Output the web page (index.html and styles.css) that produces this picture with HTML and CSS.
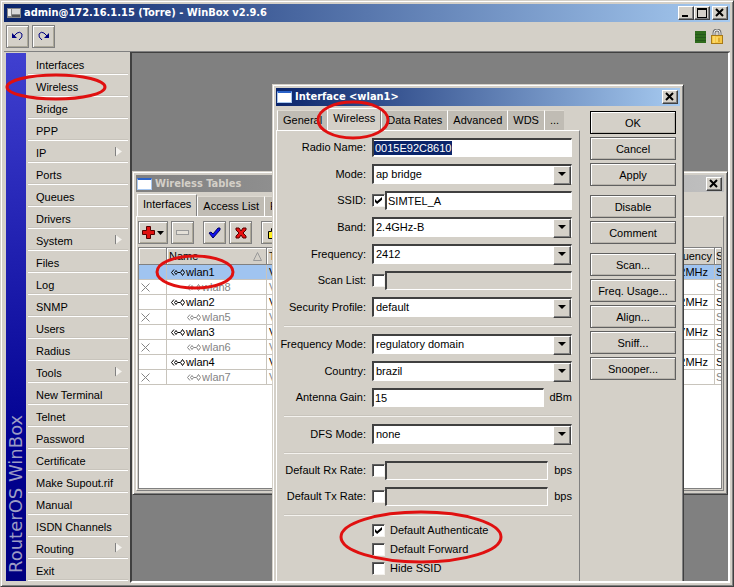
FILE: index.html
```html
<!doctype html>
<html lang="en">
<head>
	<title>admin@172.16.1.15 (Torre) - WinBox v2.9.6</title>
	<meta charset="utf-8" />
	<link rel="stylesheet" href="styles.css">
</head>
<body>
	<div class="app frame">
		<header class="titlebar">
			<svg class="app-icon" width="14" height="10" viewBox="0 0 14 10">
				<rect width="14" height="10" fill="#888"/>
				<rect x="1" y="1" width="3" height="7" fill="#eee"/>
				<rect x="5" y="1" width="8" height="5" fill="#d8d8d8"/>
				<rect x="5" y="7" width="8" height="2" fill="#555"/>
			</svg>
			<h1>admin@172.16.1.15 (Torre) - WinBox v2.9.6</h1>
			<button class="win-btn" aria-label="Minimize"><svg width="12" height="10"><path d="M2 7h6v2H2z"/></svg></button>
			<button class="win-btn" aria-label="Maximize"><svg width="12" height="10"><path d="M1 0h10v10H1zM2 2v7h8V2z" fill-rule="evenodd"/></svg></button>
			<button class="win-btn close" aria-label="Close"><svg width="12" height="10"><path d="M2 1l7 7M9 1L2 8" stroke="#000" stroke-width="2"/></svg></button>
		</header>

		<div class="toolbar">
			<button class="tool" aria-label="Undo">
				<svg width="13" height="11" viewBox="0 0 13 11"><path d="M1 2v5h5z" fill="#000080"/><path d="M3 5L6 2Q9 0 11 3Q12 6 8 9" fill="none" stroke="#000080"/></svg>
			</button>
			<button class="tool" aria-label="Redo">
				<svg width="13" height="11" viewBox="0 0 13 11"><path d="M12 2v5H7z" fill="#000080"/><path d="M10 5L7 2Q4 0 2 3Q1 6 5 9" fill="none" stroke="#000080"/></svg>
			</button>
			<svg class="load" width="11" height="12"><rect width="11" height="12" fill="#2f6b1c"/><path d="M0 3.500h11M0 6.500h11M0 9.500h11" stroke="#24581a"/></svg>
			<svg class="lock" width="12" height="15" viewBox="0 0 12 15">
				<path d="M3 7V4q0-3 3-3t3 3v3" fill="none" stroke="#777" stroke-width="3"/>
				<path d="M3 7V4q0-3 3-3t3 3v3" fill="none" stroke="#eee"/>
				<rect x=".5" y="6.500" width="11" height="8" fill="#f6c744" stroke="#a87a18"/>
				<path d="M3 7v7M6 8v5" stroke="#ffe88a"/><path d="M8 9v4" stroke="#c78f1c"/>
			</svg>
		</div>

		<div class="main">
			<nav class="sidebar">
				<div class="brand"><span>RouterOS WinBox</span></div>
				<ul class="menu">
					<li><a href="#">Interfaces</a></li>
					<li><a href="#">Wireless</a></li>
					<li><a href="#">Bridge</a></li>
					<li><a href="#">PPP</a></li>
					<li><a class="more" href="#">IP</a></li>
					<li><a href="#">Ports</a></li>
					<li><a href="#">Queues</a></li>
					<li><a href="#">Drivers</a></li>
					<li><a class="more" href="#">System</a></li>
					<li><a href="#">Files</a></li>
					<li><a href="#">Log</a></li>
					<li><a href="#">SNMP</a></li>
					<li><a href="#">Users</a></li>
					<li><a href="#">Radius</a></li>
					<li><a class="more" href="#">Tools</a></li>
					<li><a href="#">New Terminal</a></li>
					<li><a href="#">Telnet</a></li>
					<li><a href="#">Password</a></li>
					<li><a href="#">Certificate</a></li>
					<li><a href="#">Make Supout.rif</a></li>
					<li><a href="#">Manual</a></li>
					<li><a href="#">ISDN Channels</a></li>
					<li><a class="more" href="#">Routing</a></li>
					<li><a href="#">Exit</a></li>
				</ul>
			</nav>

			<main class="desktop">
				<section class="window frame tables">
					<header class="titlebar inactive">
						<span class="doc-icon"></span>
						<h2>Wireless Tables</h2>
						<button class="win-btn close" aria-label="Close"><svg width="12" height="10"><path d="M2 1l7 7M9 1L2 8" stroke="#000" stroke-width="2"/></svg></button>
					</header>
					<div class="tabs">
						<button class="tab active">Interfaces</button>
						<button class="tab">Access List</button>
						<button class="tab">R</button>
					</div>
					<div class="tables-body">
						<div class="actions">
							<button class="tool wide" aria-label="Add"><svg width="22" height="13" viewBox="0 0 22 13"><path d="M4.500.5h4v4h4v4h-4v4h-4v-4h-4v-4h4z" fill="#e01010" stroke="#500"/><path d="M15 5h7l-3.500 4z"/></svg></button>
							<button class="tool" aria-label="Remove"><svg width="13" height="5"><rect x=".5" y=".5" width="12" height="4" fill="#e4e0d8" stroke="#999"/></svg></button>
							<button class="tool gap" aria-label="Enable"><svg width="13" height="12" viewBox="0 0 13 12"><path d="M1 6l2-1 2 2 5-6h2v2L5 11z" fill="#1010f0" stroke="#000060"/></svg></button>
							<button class="tool" aria-label="Disable"><svg width="12" height="12" viewBox="0 0 12 12"><path d="M1 1h3l2 3 2-3h3v2L8 6l3 3v2H8L6 8l-2 3H1V9l3-3-3-3z" fill="#e81010" stroke="#500"/></svg></button>
							<button class="tool gap" aria-label="Comment"><svg width="12" height="12"><path d="M1.500 4.500h3v-3h4v10h-7z" fill="#ffee20" stroke="#000"/></svg></button>
						</div>
						<div class="grid">
							<table>
								<colgroup><col class="c-flag"><col class="c-name"><col><col class="c-freq"><col class="c-last"></colgroup>
								<thead>
									<tr><th></th><th class="name">Name<svg class="sort" width="9" height="9"><path d="M.5 8.500L4.500.5l4 8z" fill="none" stroke="#999"/></svg></th><th>T</th><th class="freq">Frequency</th><th>S</th></tr>
								</thead>
								<tbody>
									<tr class="selected"><td></td><td><svg class="link" width="15" height="9"><use href="#link"/></svg>wlan1</td><td>V</td><td class="freq">2412MHz</td><td>S</td></tr>
									<tr class="off"><td><svg class="x" width="9" height="9"><path d="M.5.5l8 8M8.500.5l-8 8"/></svg></td><td class="sub"><svg class="link" width="15" height="9"><use href="#link"/></svg>wlan8</td><td>V</td><td></td><td>S</td></tr>
									<tr><td></td><td><svg class="link" width="15" height="9"><use href="#link"/></svg>wlan2</td><td>V</td><td class="freq">2412MHz</td><td>S</td></tr>
									<tr class="off"><td><svg class="x" width="9" height="9"><path d="M.5.5l8 8M8.500.5l-8 8"/></svg></td><td class="sub"><svg class="link" width="15" height="9"><use href="#link"/></svg>wlan5</td><td>V</td><td></td><td>S</td></tr>
									<tr><td></td><td><svg class="link" width="15" height="9"><use href="#link"/></svg>wlan3</td><td>V</td><td class="freq">2437MHz</td><td>S</td></tr>
									<tr class="off"><td><svg class="x" width="9" height="9"><path d="M.5.5l8 8M8.500.5l-8 8"/></svg></td><td class="sub"><svg class="link" width="15" height="9"><use href="#link"/></svg>wlan6</td><td>V</td><td></td><td>S</td></tr>
									<tr><td></td><td><svg class="link" width="15" height="9"><use href="#link"/></svg>wlan4</td><td>V</td><td class="freq">2412MHz</td><td>S</td></tr>
									<tr class="off"><td><svg class="x" width="9" height="9"><path d="M.5.5l8 8M8.500.5l-8 8"/></svg></td><td class="sub"><svg class="link" width="15" height="9"><use href="#link"/></svg>wlan7</td><td>V</td><td></td><td>S</td></tr>
								</tbody>
							</table>
						</div>
					</div>
				</section>

				<section class="window frame dialog">
					<header class="titlebar">
						<span class="doc-icon"></span>
						<h2>Interface &lt;wlan1&gt;</h2>
						<button class="win-btn close" aria-label="Close"><svg width="12" height="10"><path d="M2 1l7 7M9 1L2 8" stroke="#000" stroke-width="2"/></svg></button>
					</header>
					<div class="dialog-body">
						<div class="pages">
							<div class="tabs">
								<button class="tab">General</button>
								<button class="tab active">Wireless</button>
								<button class="tab">Data Rates</button>
								<button class="tab">Advanced</button>
								<button class="tab">WDS</button>
								<button class="tab">...</button>
							</div>
							<form class="panel">
								<div class="row"><label for="radio">Radio Name:</label><input id="radio" class="field marked" value="0015E92C8610"></div>
								<div class="row"><label for="mode">Mode:</label><span class="combo"><select id="mode"><option>ap bridge</option></select></span></div>
								<div class="row"><label for="ssid">SSID:</label><input type="checkbox" aria-label="Use SSID" checked><input id="ssid" class="field" value="SIMTEL_A"></div>
								<div class="row"><label for="band">Band:</label><span class="combo"><select id="band"><option>2.4GHz-B</option></select></span></div>
								<div class="row"><label for="freq">Frequency:</label><span class="combo"><select id="freq"><option>2412</option></select></span></div>
								<div class="row"><label for="scan">Scan List:</label><input type="checkbox" aria-label="Use scan list"><input id="scan" class="field" disabled></div>
								<div class="row"><label for="security">Security Profile:</label><span class="combo"><select id="security"><option>default</option></select></span></div>
								<hr>
								<div class="row"><label for="fmode">Frequency Mode:</label><span class="combo"><select id="fmode"><option>regulatory domain</option></select></span></div>
								<div class="row"><label for="country">Country:</label><span class="combo"><select id="country"><option>brazil</option></select></span></div>
								<div class="row"><label for="gain">Antenna Gain:</label><input id="gain" class="field" value="15"><span class="unit dbm">dBm</span></div>
								<hr>
								<div class="row"><label for="dfs">DFS Mode:</label><span class="combo"><select id="dfs"><option>none</option></select></span></div>
								<hr>
								<div class="row"><label for="rx">Default Rx Rate:</label><input type="checkbox" aria-label="Limit rx rate"><input id="rx" class="field" disabled><span class="unit">bps</span></div>
								<div class="row"><label for="tx">Default Tx Rate:</label><input type="checkbox" aria-label="Limit tx rate"><input id="tx" class="field" disabled><span class="unit">bps</span></div>
								<hr>
								<div class="checks">
									<label><input type="checkbox" checked>Default Authenticate</label>
									<label><input type="checkbox">Default Forward</label>
									<label><input type="checkbox">Hide SSID</label>
								</div>
							</form>
						</div>
						<div class="buttons">
							<button class="default">OK</button>
							<button>Cancel</button>
							<button>Apply</button>
							<button class="group">Disable</button>
							<button>Comment</button>
							<button class="group">Scan...</button>
							<button>Freq. Usage...</button>
							<button>Align...</button>
							<button>Sniff...</button>
							<button>Snooper...</button>
						</div>
					</div>
				</section>
			</main>
		</div>

		<!-- red marker rings -->
		<svg class="marks">
			<defs>
				<g id="link" fill="none" stroke="currentColor">
					<path d="M3 1.500l-2.500 3 2.500 3M3.500 4.500l1.500-2 1.500 2-1.500 2zM9.500 4.500l2-3 2 3-2 3z"/>
					<path d="M7 4.500h2"/>
				</g>
			</defs>
			<ellipse cx="56" cy="87" rx="49" ry="12"/>
			<ellipse cx="353" cy="120" rx="35" ry="18"/>
			<ellipse cx="195" cy="272" rx="38" ry="16"/>
			<ellipse cx="421" cy="537" rx="80" ry="25"/>
		</svg>
	</div>
</body>
</html>
```

FILE: styles.css
```css
* {
	box-sizing: border-box;
}
html, body {
	margin: 0;
	height: 100%;
	overflow: hidden;
}
body, button, input, select {
	font-family: "Liberation Sans", Arial, sans-serif;
	font-size: 11px;
	line-height: 15px;
	color: #000;
}
button {
	padding: 0;
	background: #d4d0c8;
}
h1, h2 {
	flex: 1;
	margin: 0;
	font: bold 11px/18px "DejaVu Sans Condensed", "DejaVu Sans", sans-serif;
	white-space: nowrap;
}
svg {
	flex: none;
}

/* window chrome */
.frame {
	background: #d4d0c8;
	border: 1px solid;
	border-color: #d4d0c8 #404040 #404040 #d4d0c8;
	box-shadow: inset 1px 1px #fff, inset -1px -1px #808080;
	padding: 3px;
}
.titlebar {
	display: flex;
	align-items: center;
	height: 18px;
	padding: 0 2px 0 3px;
	background: linear-gradient(90deg, #0a246a, #a6caf0);
	color: #fff;
}
.titlebar.inactive {
	background: linear-gradient(90deg, #808080, #c0c0c0);
	color: #d4d0c8;
}
.app-icon {
	margin-right: 3px;
}
.doc-icon {
	width: 15px;
	height: 12px;
	margin: 0 3px 0 -2px;
	background: #fff;
	border: 1px solid #a8c8f0;
	border-top: 2px solid #2a62c8;
}
.win-btn {
	display: flex;
	align-items: center;
	justify-content: center;
	width: 16px;
	height: 14px;
	border: 1px solid;
	border-color: #fff #404040 #404040 #fff;
	box-shadow: inset -1px -1px #808080;
}
.win-btn.close {
	margin-left: 2px;
}

.app {
	position: relative;
	display: flex;
	flex-direction: column;
	min-height: 100%;
}
.toolbar {
	display: flex;
	align-items: center;
	gap: 3px;
	height: 29px;
	padding: 0 7px 0 2px;
}
.tool {
	display: flex;
	align-items: center;
	justify-content: center;
	width: 23px;
	height: 23px;
	border: 1px solid #808080;
	box-shadow: inset 1px 1px #fff, inset -1px -1px #aca899;
}
.load {
	margin-left: auto;
	margin-right: 2px;
}

.main {
	display: flex;
	flex: 1;
	border-top: 1px solid #808080;
}
.sidebar {
	display: flex;
	width: 126px;
	padding: 1px 2px 2px;
}
.brand {
	display: flex;
	justify-content: center;
	width: 20px;
	padding-bottom: 8px;
	background: linear-gradient(#4040d0, #000090 75%, #000080);
	color: #9c9cc4;
	font: 18px/20px "DejaVu Sans", sans-serif;
}
.brand span {
	writing-mode: vertical-rl;
	transform: rotate(180deg);
	white-space: nowrap;
}
.menu {
	flex: 1;
	margin: 0;
	padding: 0 0 0 2px;
	list-style: none;
}
.menu a {
	display: flex;
	align-items: center;
	height: 22px;
	padding: 4px 6px 0 8px;
	border-bottom: 1px solid #fff;
	box-shadow: inset 0 -1px #c8c4bc;
	color: #000;
	text-decoration: none;
	white-space: nowrap;
}
.more::after {
	content: "";
	width: 7px;
	height: 10px;
	margin: 0 0 4px auto;
	background: linear-gradient(#808080, #808080) 0 0/1px 100% no-repeat, #f4f2ee;
	clip-path: polygon(0 0, 100% 50%, 0 100%);
}

.desktop {
	position: relative;
	flex: 1;
	overflow: hidden;
	background: #808080;
	border: 1px solid #404040;
	border-width: 1px 2px 2px;
	border-color: #404040 #fff #fff #404040;
}
.window {
	position: absolute;
	display: flex;
	flex-direction: column;
}

/* tabs */
.tabs {
	display: flex;
	align-items: flex-end;
	padding-left: 1px;
	height: 22px;
}
.tab {
	flex: none;
	height: 20px;
	padding: 0 5px;
	border: 0;
	border-left: 1px solid #fff;
	border-top: 1px solid #dedad2;
	background: #c0bcb4;
	white-space: nowrap;
}
.tab.active {
	height: 22px;
	padding: 0 5px 3px;
	border-top-color: #fff;
	border-right: 1px solid #808080;
	background: #d4d0c8;
}

/* wireless tables */
.tables {
	top: 118px;
	left: 0;
	right: 0;
	height: 324px;
}
.tables .titlebar {
	height: 17px;
}
.tables .tabs {
	margin-top: 2px;
}
.tables-body {
	display: flex;
	flex: 1;
	flex-direction: column;
	padding: 4px 1px 1px;
	border: 1px solid;
	border-color: #fff #808080 #808080 #fff;
}
.actions {
	display: flex;
	gap: 3px;
}
.tool.wide {
	width: 30px;
}
.tool.gap {
	margin-left: 6px;
}
.grid {
	flex: 1;
	margin-top: 3px;
	border: 1px solid #808080;
	background: #fff;
	overflow: hidden;
}
table {
	width: 100%;
	table-layout: fixed;
	border-collapse: separate;
	border-spacing: 0;
}
.c-flag { width: 28px; }
.c-name { width: 100px; }
.c-freq { width: 60px; }
.c-last { width: 6px; }
th, td {
	height: 15px;
	padding: 0 2px;
	border-right: 1px solid #c8c4bc;
	border-bottom: 1px solid #c8c4bc;
	font-weight: normal;
	line-height: 14px;
	text-align: left;
	white-space: nowrap;
	overflow: hidden;
}
th {
	height: 17px;
	background: #d4d0c8;
	border-right-color: #808080;
	border-bottom-color: #808080;
	box-shadow: inset 1px 1px #fff;
	line-height: 16px;
}
th:last-child, td:last-child {
	padding: 0 0 0 1px;
	border-right: 0;
}
.sort {
	float: right;
	margin: 4px 2px 0 0;
}
td:nth-child(2) {
	padding-left: 4px;
}
td.sub {
	padding-left: 20px;
}
.freq {
	text-align: right;
}
td.freq {
	padding-right: 6px;
}
.selected {
	background: #a0c4f0;
}
.off {
	color: #848484;
}
.link {
	vertical-align: -1px;
}
.x {
	stroke: #848484;
	vertical-align: -1px;
}

/* interface dialog */
.dialog {
	top: 31px;
	left: 140px;
	width: 412px;
	bottom: -6px;
}
.dialog-body {
	display: flex;
	flex: 1;
	gap: 10px;
}
.pages {
	display: flex;
	flex: 1;
	flex-direction: column;
	min-width: 0;
	padding-top: 2px;
}
.panel {
	display: flex;
	flex: 1;
	flex-direction: column;
	gap: 7px;
	padding: 7px 7px 0 7px;
	border: 1px solid;
	border-color: #fff #808080 #808080 #fff;
}
.row {
	display: flex;
	align-items: center;
}
.row > label {
	display: flex;
	justify-content: flex-end;
	width: 82px;
	margin-right: 6px;
	white-space: nowrap;
}
.field {
	flex: 1;
	min-width: 0;
	height: 19px;
	padding: 0 1px;
	border: 1px solid;
	border-color: #404040 #fff #fff #404040;
	border-top-width: 2px;
	border-left-width: 2px;
	background: #fff;
}
.field:disabled {
	background: #d4d0c8;
}
.field.marked {
	color: #fff;
	background: linear-gradient(#0a246a, #0a246a) 0 1px/78px 14px no-repeat #fff;
}
.combo {
	position: relative;
	flex: 1;
	display: flex;
	height: 20px;
}
.combo select {
	flex: 1;
	min-width: 0;
	appearance: none;
	padding: 0 20px 0 2px;
	border: 1px solid;
	border-color: #404040 #fff #fff #404040;
	border-top-width: 2px;
	border-left-width: 2px;
	border-radius: 0;
	background: #fff;
}
.combo::before {
	content: "";
	position: absolute;
	top: 2px;
	right: 1px;
	width: 16px;
	height: 17px;
	background: #d4d0c8;
	border: 1px solid;
	border-color: #fff #404040 #404040 #fff;
	box-shadow: inset -1px -1px #808080;
	pointer-events: none;
}
.combo::after {
	content: "";
	position: absolute;
	top: 8px;
	right: 6px;
	border: 4px solid transparent;
	border-top-color: #000;
	border-bottom: 0;
	pointer-events: none;
}
input[type=checkbox] {
	appearance: none;
	flex: none;
	width: 13px;
	height: 13px;
	margin: 0;
	border: 1px solid;
	border-color: #606060 #f4f2ee #f4f2ee #606060;
	box-shadow: inset 1px 1px #404040;
	background: #fff;
}
input[type=checkbox]:checked::before {
	content: "";
	display: block;
	width: 7px;
	height: 7px;
	margin: 2px;
	background: #000;
	clip-path: polygon(0 30%, 30% 60%, 100% 0, 100% 40%, 30% 100%, 0 70%);
}
.unit {
	width: 24px;
	text-align: right;
}
.unit.dbm {
	width: 28px;
}
hr {
	width: 100%;
	margin: 1px 0 0;
	border: 0;
	border-top: 1px solid #c8c4bc;
	border-bottom: 1px solid #f4f2ee;
}
.checks {
	display: flex;
	flex-direction: column;
	align-items: flex-start;
	gap: 4px;
	padding-left: 88px;
}
.checks label {
	display: flex;
	align-items: center;
	gap: 5px;
}
.buttons {
	display: flex;
	flex: none;
	flex-direction: column;
	gap: 3px;
	width: 90px;
	padding: 5px 4px 0 0;
}
.buttons button {
	height: 23px;
	padding-top: 2px;
	border: 1px solid #606060;
	box-shadow: inset 1px 1px #fff, inset -1px -1px #b8b4ac;
}
.buttons .default {
	border-color: #000;
}
.buttons .group {
	margin-top: 6px;
}

.marks {
	position: absolute;
	top: -1px;
	left: -1px;
	width: 734px;
	height: 587px;
	pointer-events: none;
}
.marks ellipse {
	fill: none;
	stroke: #e01010;
	stroke-width: 3;
}
```
